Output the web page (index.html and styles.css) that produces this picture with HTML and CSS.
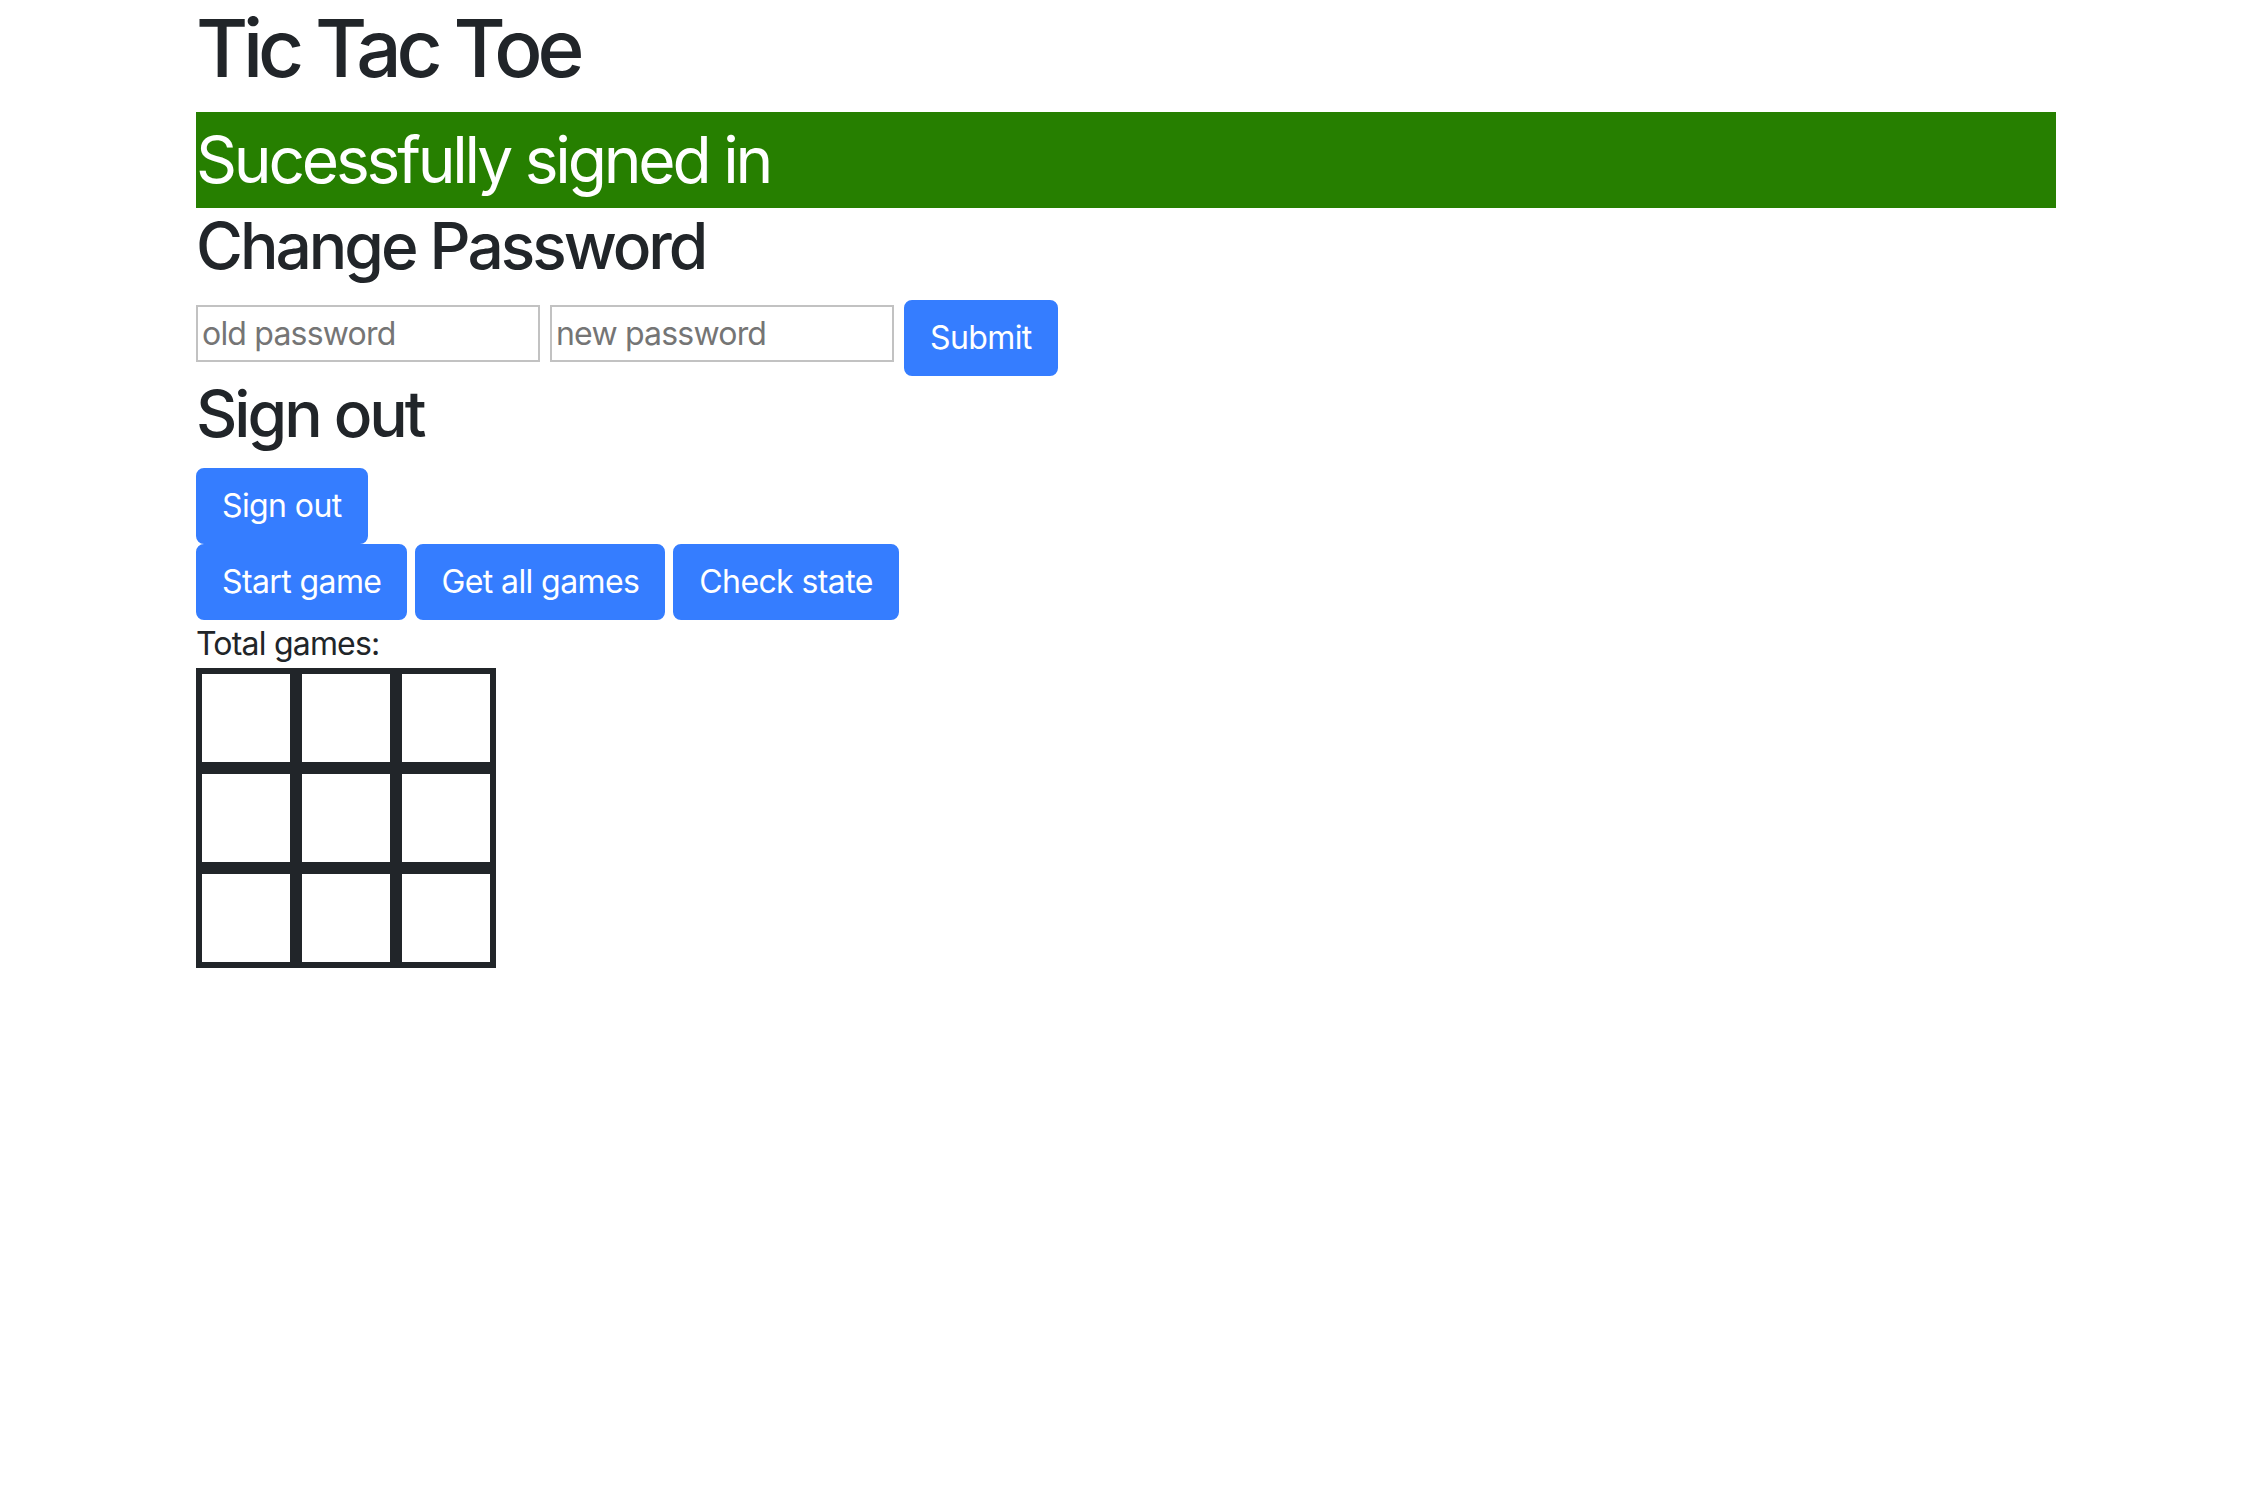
FILE: index.html
```html
<!DOCTYPE html>
<html lang="en">
<head>
<meta charset="utf-8">
<title>Tic Tac Toe</title>
<link rel="stylesheet" href="styles.css">
</head>
<body>
<div class="container">
  <h1 class="title">Tic Tac Toe</h1>
  <div class="alert">Sucessfully signed in</div>
  <h2 class="heading">Change Password</h2>
  <form class="pw-form">
    <input class="field" type="password" placeholder="old password">
    <input class="field" type="password" placeholder="new password">
    <button class="btn" type="button">Submit</button>
  </form>
  <h2 class="heading">Sign out</h2>
  <div class="btn-row">
    <button class="btn" type="button">Sign out</button>
  </div>
  <div class="btn-row">
    <button class="btn" type="button">Start game</button>
    <button class="btn" type="button">Get all games</button>
    <button class="btn" type="button">Check state</button>
  </div>
  <div class="total">Total games:</div>
  <div class="board">
    <div class="cell"></div><div class="cell"></div><div class="cell"></div>
    <div class="cell"></div><div class="cell"></div><div class="cell"></div>
    <div class="cell"></div><div class="cell"></div><div class="cell"></div>
  </div>
</div>
</body>
</html>
```
FILE: styles.css
```css
* { box-sizing: border-box; }

body {
  margin: 0;
  background: #ffffff;
  color: #212529;
  font-family: "Inter", "Liberation Sans", sans-serif;
  font-size: 32px;
  line-height: 1.5;
}

.container {
  width: 1860px;
  margin: 0 auto;
}

.title {
  margin: 0 0 16px;
  font-size: 80px;
  font-weight: 500;
  line-height: 96px;
  letter-spacing: -5.2px;
}

.alert {
  height: 96px;
  background: #267f00;
  color: #ffffff;
  font-size: 64px;
  line-height: 96px;
  font-weight: 400;
  letter-spacing: -3.2px;
}

.heading {
  margin: 0 0 16px;
  font-size: 64px;
  font-weight: 500;
  line-height: 76px;
  letter-spacing: -3px;
}

.pw-form {
  display: flex;
  align-items: flex-start;
  gap: 10px;
  margin: 0;
}

.field {
  width: 344px;
  height: 57px;
  margin-top: 5px;
  padding: 2px 4px;
  border: 2px solid #c2c2c2;
  border-radius: 0;
  font-family: inherit;
  font-size: 32px;
  letter-spacing: -0.8px;
  color: #212529;
  background: #ffffff;
  outline: none;
}

.field::placeholder {
  color: #757575;
}

.btn {
  display: inline-block;
  padding: 12px 24px;
  border: 2px solid #357dff;
  border-radius: 8px;
  background: #357dff;
  color: #ffffff;
  font-family: inherit;
  font-size: 32px;
  line-height: 48px;
  font-weight: 400;
  letter-spacing: -0.6px;
  cursor: pointer;
}

.btn-row {
  display: flex;
  gap: 8px;
}

.total {
  line-height: 48px;
  letter-spacing: -0.8px;
}

.board {
  display: grid;
  grid-template-columns: repeat(3, 100px);
  grid-auto-rows: 100px;
  width: 300px;
}

.cell {
  border: 6px solid #212529;
}
```
